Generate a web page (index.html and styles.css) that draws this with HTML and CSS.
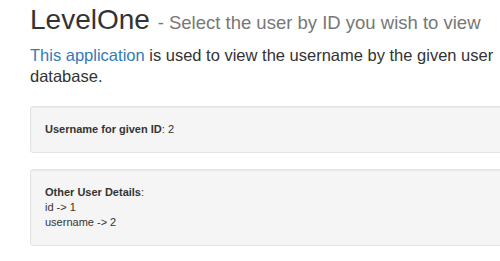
FILE: index.html
```html
<!DOCTYPE html>
<html>
<head>
<meta charset="utf-8">
<link rel="stylesheet" href="styles.css">
</head>
<body>
<div class="container">
  <h1 class="title">LevelOne <small class="subtitle">- Select the user by ID you wish to view</small></h1>
  <p class="intro"><a href="#" class="link">This application</a> is used to view the username by the given user database.</p>
  <div class="well">
    <b>Username for given ID</b>: 2
  </div>
  <div class="well">
    <b>Other User Details</b>:<br>
    id -&gt; 1<br>
    username -&gt; 2
  </div>
</div>
</body>
</html>
```
FILE: styles.css
```css
html, body {
  margin: 0;
  padding: 0;
  overflow: hidden;
  background: #fff;
}
body {
  font-family: "Liberation Sans", Arial, sans-serif;
  color: #333;
  width: 500px;
  height: 261px;
}
.container {
  width: 520px;
  padding-left: 30px;
}
.title {
  font-size: 28px;
  font-weight: 500;
  line-height: 1.1;
  margin: 5px 0 0 0;
  color: #333;
}
.subtitle {
  font-size: 18.5px;
  color: #777;
  font-weight: 400;
}
.intro {
  font-size: 16.5px;
  line-height: 21px;
  margin: 9px 0 19px 0;
}
.link {
  color: #337ab7;
  text-decoration: none;
}
.well {
  font-size: 11px;
  line-height: 15px;
  background: #f5f5f5;
  border: 1px solid #e3e3e3;
  border-radius: 3px;
  box-shadow: inset 0 1px 1px rgba(0,0,0,.05);
  padding: 15px 14px;
  margin-bottom: 16px;
}
```
